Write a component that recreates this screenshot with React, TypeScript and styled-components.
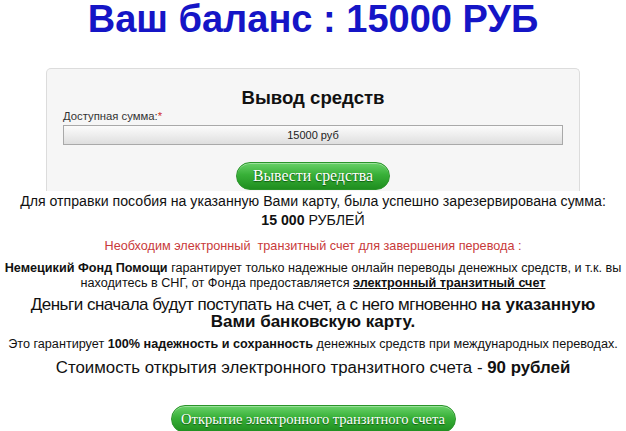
import React from "react";
import styled, { createGlobalStyle } from "styled-components";

const GlobalStyle = createGlobalStyle`
  html, body {
    margin: 0;
    padding: 0;
    background: #ffffff;
  }
  body {
    font-family: "Liberation Sans", Arial, sans-serif;
    color: #151515;
  }
`;

const Page = styled.div`
  width: 626px;
  display: flex;
  flex-direction: column;
  align-items: center;
  text-align: center;
`;

const Title = styled.h1`
  margin: 0;
  font-size: 38px;
  line-height: 38px;
  font-weight: bold;
  color: #1515c6;
`;

const Panel = styled.div`
  margin-top: 30px;
  box-sizing: border-box;
  width: 534px;
  background: #f6f6f6;
  border: 1px solid #dcdcdc;
  border-bottom: none;
  border-radius: 5px 5px 0 0;
  padding: 18px 16px 1px;
  display: flex;
  flex-direction: column;
  align-items: stretch;
`;

const PanelTitle = styled.h2`
  margin: 0;
  font-size: 18.6px;
  line-height: 22px;
  font-weight: bold;
  color: #111;
`;

const FieldLabel = styled.label`
  margin-top: 1px;
  font-size: 11.3px;
  line-height: 13px;
  color: #333;
  text-align: left;
`;

const Required = styled.span`
  color: #d23030;
`;

const AmountField = styled.div`
  margin-top: 2px;
  height: 20px;
  box-sizing: border-box;
  border: 1px solid #a9a9a9;
  background: linear-gradient(to bottom, #fbfbfb 0%, #ececec 55%, #dedede 100%);
  font-size: 11px;
  line-height: 18px;
  color: #222;
  text-align: center;
`;

const GreenButton = styled.button<{ $width: number; $size: number }>`
  align-self: center;
  width: ${(p) => p.$width}px;
  height: 28px;
  border: 1px solid #2a942a;
  border-radius: 14px;
  background: linear-gradient(to bottom, #68d168 0%, #38b038 45%, #1f8e1f 100%);
  box-shadow: inset 0 1px 0 rgba(255, 255, 255, 0.35);
  color: #ffffff;
  font-family: "Liberation Serif", "Times New Roman", serif;
  font-size: ${(p) => p.$size}px;
  line-height: 26px;
  padding: 0;
  white-space: nowrap;
  text-shadow: 0 1px 1px rgba(0, 60, 0, 0.7);
  cursor: pointer;
`;

const PanelButton = styled(GreenButton)`
  margin-top: 17px;
`;

const Lead = styled.p`
  margin: 1px 0 0;
  font-size: 14.15px;
  line-height: 19px;
  color: #111;
  white-space: nowrap;
`;

const Notice = styled.p`
  margin: 8px 0 0;
  font-size: 12.67px;
  line-height: 16px;
  color: #c83a3a;
  white-space: nowrap;
`;

const Info = styled.p<{ $size: number; $lh: number; $mt: number; $ls?: number }>`
  margin: ${(p) => p.$mt}px 0 0;
  font-size: ${(p) => p.$size}px;
  line-height: ${(p) => p.$lh}px;
  letter-spacing: ${(p) => p.$ls ?? 0}px;
  color: #111;
  white-space: nowrap;

  b {
    letter-spacing: 0;
  }
`;

const Link = styled.a`
  color: #111;
  font-weight: bold;
  text-decoration: underline;
`;

const BottomButton = styled(GreenButton)`
  margin-top: 26px;
`;

export default function App() {
  return (
    <>
      <GlobalStyle />
      <Page>
        <Title>Ваш баланс : 15000 РУБ</Title>
        <Panel>
          <PanelTitle>Вывод средств</PanelTitle>
          <FieldLabel>
            Доступная сумма:<Required>*</Required>
          </FieldLabel>
          <AmountField>15000 руб</AmountField>
          <PanelButton $width={154} $size={15.8}>
            Вывести средства
          </PanelButton>
        </Panel>
        <Lead>
          Для отправки пособия на указанную Вами карту, была успешно зарезервирована сумма:
          <br />
          <b>15 000</b> РУБЛЕЙ
        </Lead>
        <Notice>Необходим электронный&nbsp; транзитный счет для завершения перевода :</Notice>
        <Info $size={12.65} $lh={15} $mt={7}>
          <b>Немецикий Фонд Помощи</b> гарантирует только надежные онлайн переводы денежных средств, и т.к. вы
          <br />
          находитесь в СНГ, от Фонда предоставляется <Link href="#">электронный транзитный счет</Link>
        </Info>
        <Info $size={17} $lh={17} $mt={5} $ls={-0.5}>
          Деньги сначала будут поступать на счет, а с него мгновенно <b>на указанную</b>
          <br />
          <b>Вами банковскую карту.</b>
        </Info>
        <Info $size={12.65} $lh={16} $mt={6}>
          Это гарантирует <b>100% надежность и сохранность</b> денежных средств при международных переводах.
        </Info>
        <Info $size={16.85} $lh={22} $mt={5}>
          Стоимость открытия электронного транзитного счета - <b>90 рублей</b>
        </Info>
        <BottomButton $width={285} $size={14.5}>
          Открытие электронного транзитного счета
        </BottomButton>
      </Page>
    </>
  );
}
